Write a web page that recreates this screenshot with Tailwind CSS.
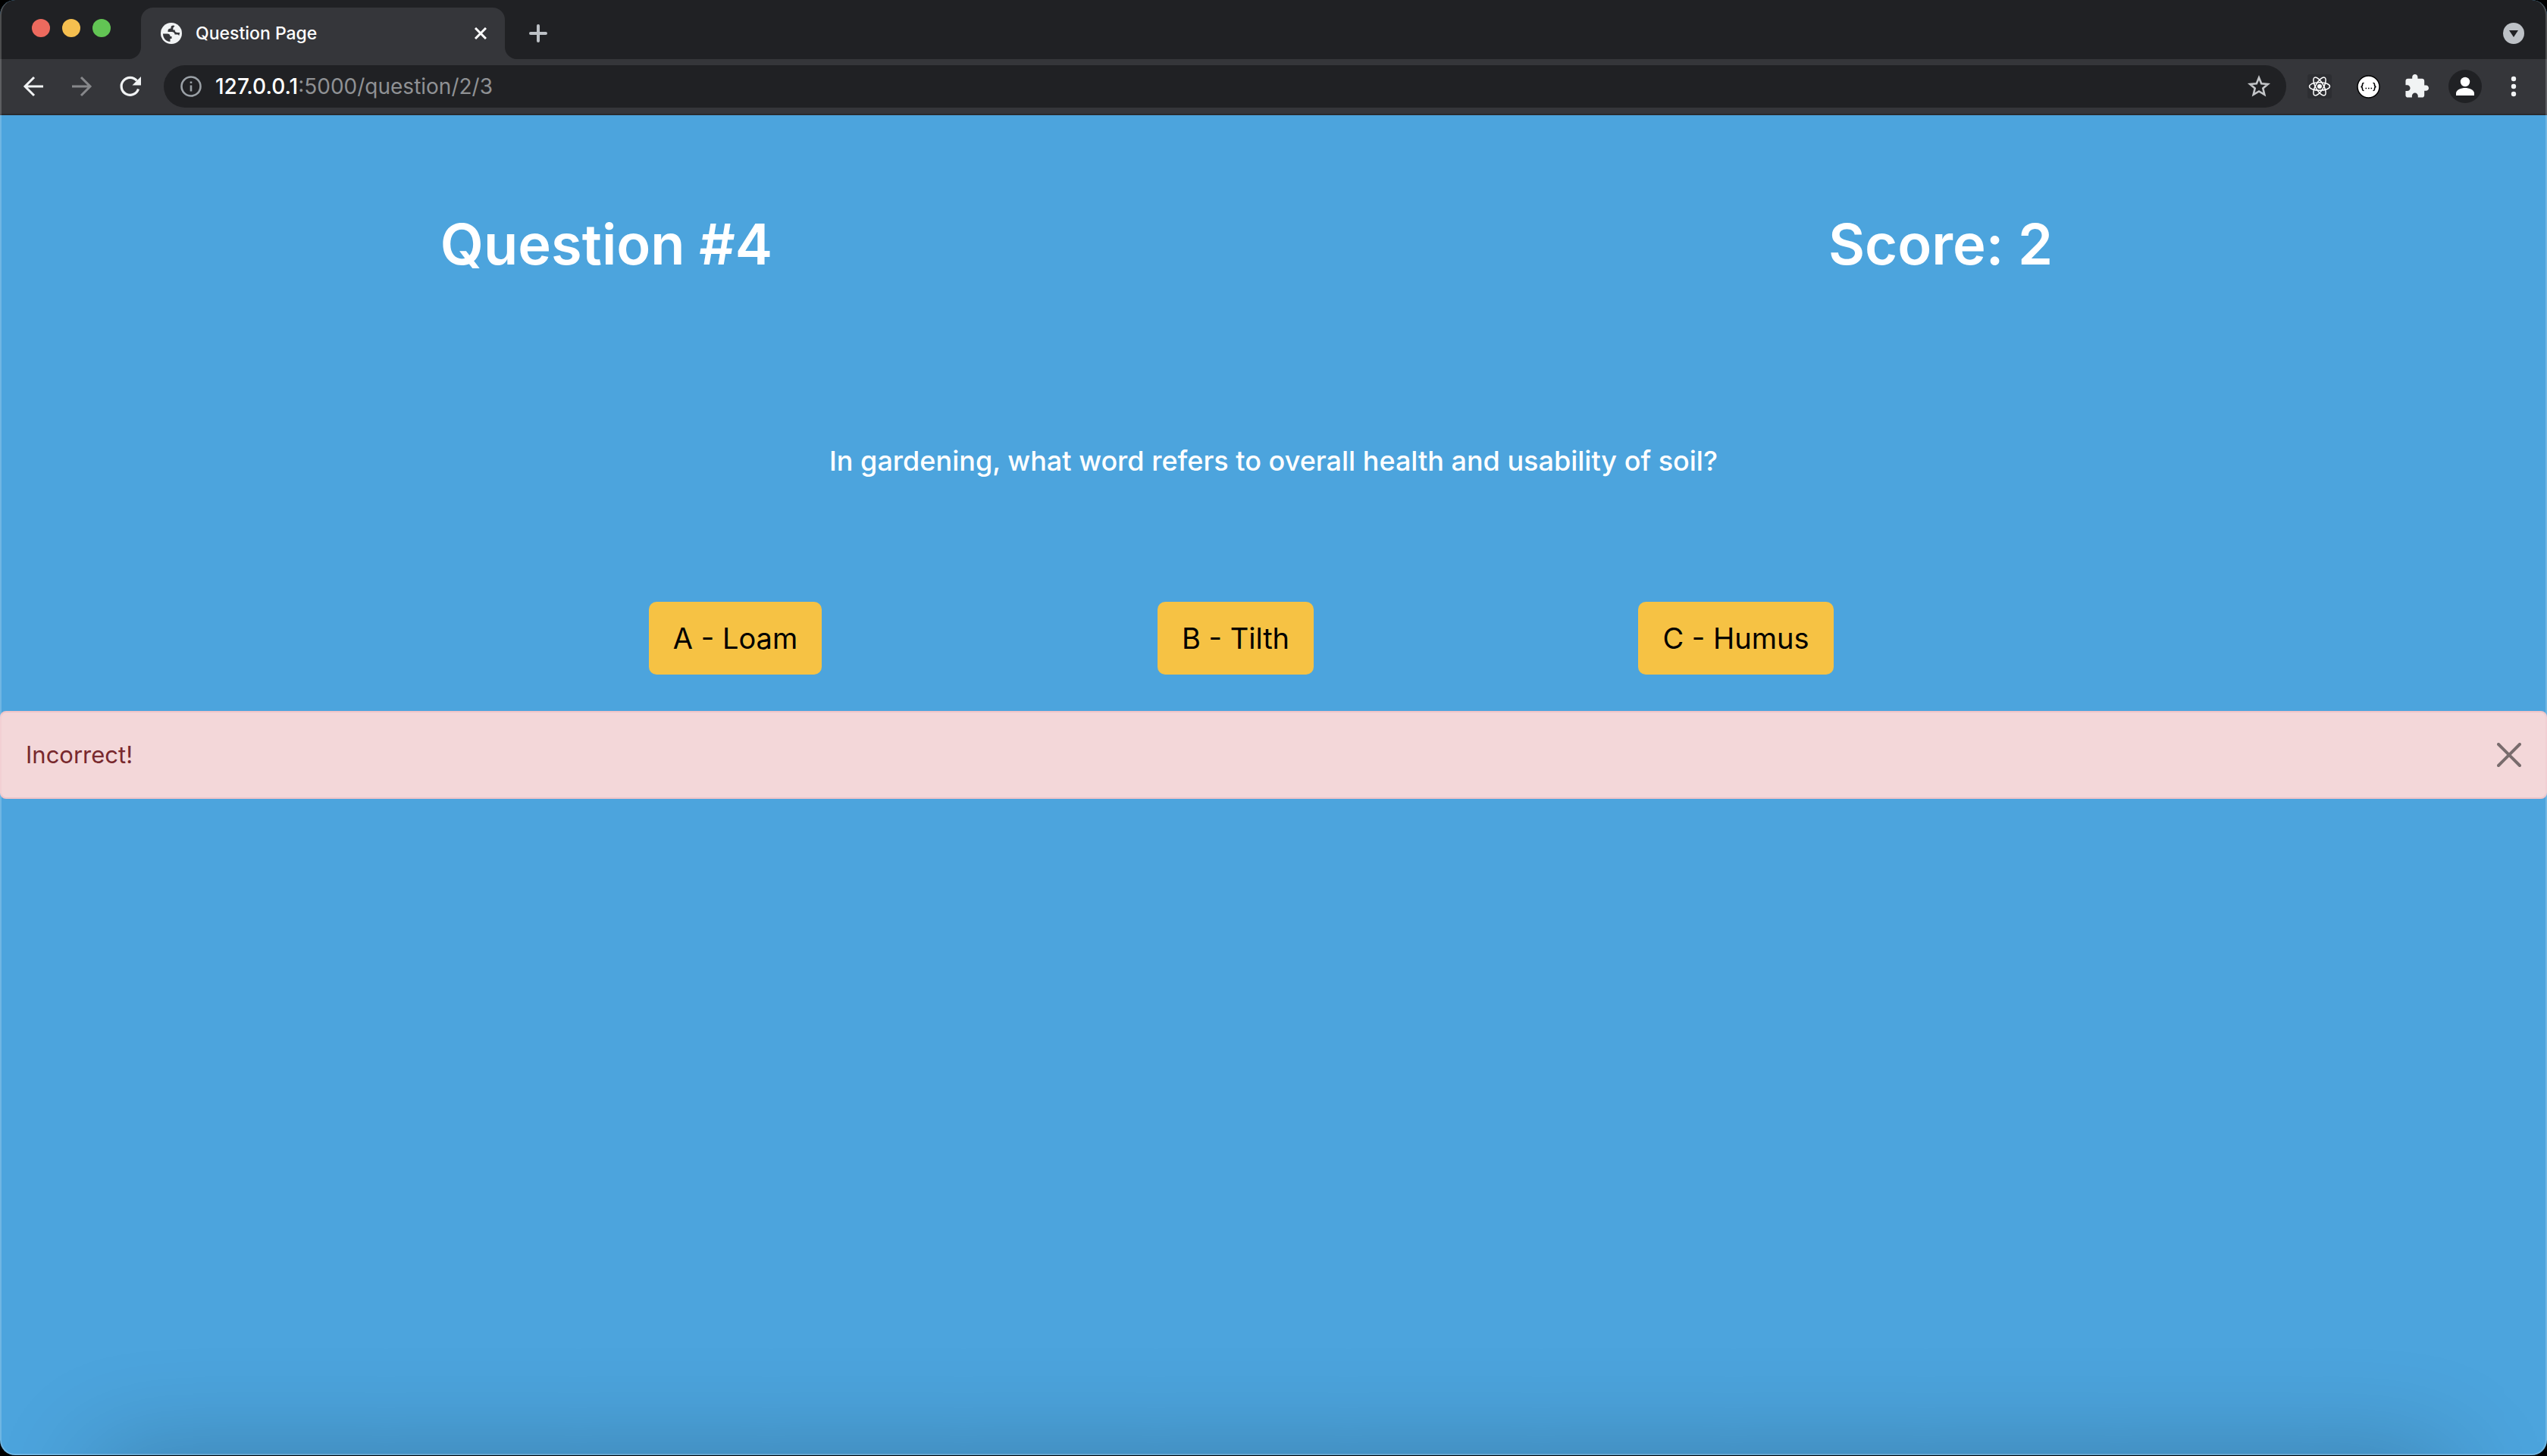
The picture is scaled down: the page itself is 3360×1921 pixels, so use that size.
<!DOCTYPE html>
<html lang="en">
<head>
<meta charset="utf-8">
<title>Question Page</title>
<script src="https://cdn.jsdelivr.net/npm/@tailwindcss/browser@4"></script>
</head>
<body class="bg-black font-['Inter',sans-serif]">
<div class="relative flex h-[calc(100vh-1px)] flex-col overflow-hidden rounded-[20px] bg-[#4ca4dd]">

  <!-- Tab strip -->
  <header class="flex h-[78px] shrink-0 items-end bg-[#202124]">
    <div class="flex h-full w-[186px] items-center gap-4 pb-1 pl-[42px]">
      <button aria-label="Close window" class="size-6 rounded-full bg-[#ed6a5e]"></button>
      <button aria-label="Minimize window" class="size-6 rounded-full bg-[#f5bf4f]"></button>
      <button aria-label="Zoom window" class="size-6 rounded-full bg-[#62c554]"></button>
    </div>
    <div class="relative flex h-[68px] w-[480px] items-center rounded-t-2xl bg-[#35363a] pr-6 pl-[26px] text-white">
      <svg class="absolute bottom-0 -left-4 size-4" viewBox="0 0 16 16" fill="#35363a"><path d="M16 0v16H0A16 16 0 0 0 16 0z"/></svg>
      <svg class="absolute -right-4 bottom-0 size-4" viewBox="0 0 16 16" fill="#35363a"><path d="M0 0v16h16A16 16 0 0 1 0 0z"/></svg>
      <svg class="size-7" viewBox="0 0 28 28"><circle cx="14" cy="14" r="14" fill="#f1f3f4"/><path d="M3 14.500h5.500c3 0 4 1.500 4 3.500h2v3h-2v4C6.500 24.500 3 20 3 14.500z" fill="#35363a"/><path d="M17 3.500c-2 0-3.500.8-3.500 2.500v1.500c-2.500 0-4 1-4 3v1.500h5c2.500 0 4 1.200 4 3.500h3c1.500 0 2.200.6 2.700 1.800l1-4.300h-3c-2 0-3.500-1-3.500-2.800V9.500H16.500c-.8-2.200.3-3.800 2-5z" fill="#35363a"/></svg>
      <span class="ml-[18px] flex-1 text-[23px] font-medium">Question Page</span>
      <button aria-label="Close tab"><svg class="size-4" viewBox="0 0 16 16" stroke="#fff" stroke-width="3"><path d="M1 1l14 14M15 1L1 15"/></svg></button>
    </div>
    <button aria-label="New tab" class="mb-[22px] ml-8"><svg class="size-6" viewBox="0 0 24 24" stroke="#bdc1c6" stroke-width="4" stroke-linecap="round"><path d="M12 2v20M2 12h20"/></svg></button>
    <button aria-label="Search tabs" class="mr-[30px] mb-5 ml-auto"><svg class="size-7" viewBox="0 0 28 28"><circle cx="14" cy="14" r="14" fill="#bdc1c6"/><path d="M8 10h12l-6 9z" fill="#202124"/></svg></button>
  </header>

  <!-- Toolbar -->
  <nav class="flex h-[74px] shrink-0 items-center border-b-2 border-[#292a2d] bg-[#35363a] pr-7 pl-7">
    <button aria-label="Back"><svg class="size-8" viewBox="0 0 32 32" fill="none" stroke="#f1f3f4" stroke-width="3"><path d="M29 16H5M17 4L5 16l12 12"/></svg></button>
    <button aria-label="Forward" class="ml-8"><svg class="size-8" viewBox="0 0 32 32" fill="none" stroke="#87888b" stroke-width="3"><path d="M3 16h24M15 4l12 12-12 12"/></svg></button>
    <button aria-label="Reload" class="ml-8"><svg class="size-8" viewBox="0 0 32 32"><path d="M26.500 19.500A11.500 11.500 0 1 1 24.500 8.500" fill="none" stroke="#f1f3f4" stroke-width="3.200"/><path d="M30 3v11.500H18.500z" fill="#f1f3f4"/></svg></button>
    <div class="ml-7 flex h-14 flex-1 items-center rounded-full bg-[#202124] pr-5 pl-[22px]">
      <svg class="size-7" viewBox="0 0 28 28" fill="none" stroke="#9aa0a6"><circle cx="14" cy="14" r="12.500" stroke-width="2.600"/><path d="M14 12.500v8M14 7.500v2.600" stroke-width="2.600"/></svg>
      <a href="#" class="ml-[18px] flex-1 text-[28px] text-[#8f9194]"><span class="font-medium text-white">127.0.0.1</span>:5000/question/2/3</a>
      <button aria-label="Bookmark this tab"><svg class="size-8" viewBox="0 0 32 32" fill="none" stroke="#c3c5c8" stroke-width="2.600"><path d="M16 4.500l3.200 7.800 8.600.7-6.500 5.500 2 8.300L16 22.400l-7.300 4.400 2-8.300L4.200 13l8.600-.7z"/></svg></button>
    </div>
    <div class="ml-7 flex items-center">
      <button aria-label="React Developer Tools" class="rounded-[3px] bg-[#2d2e32]"><svg class="size-8" viewBox="0 0 32 32" fill="none" stroke="#fff" stroke-width="1.500"><ellipse cx="16" cy="16" rx="13.500" ry="5.200"/><ellipse cx="16" cy="16" rx="13.500" ry="5.200" transform="rotate(60 16 16)"/><ellipse cx="16" cy="16" rx="13.500" ry="5.200" transform="rotate(120 16 16)"/><circle cx="16" cy="16" r="3" fill="#fff" stroke="none"/></svg></button>
      <button aria-label="JSON viewer" class="ml-8"><svg class="size-8" viewBox="0 0 32 32" fill="none" stroke="#000" stroke-width="1.600"><circle cx="16.500" cy="16.500" r="14.500" fill="#fff" stroke-width="1.500"/><path d="M10.500 11.500c-2 0-2 .6-2 2.200s-.3 2.600-2 2.800c1.700.2 2 1.200 2 2.800s0 2.200 2 2.200M22.500 11.500c2 0 2 .6 2 2.200s.3 2.600 2 2.800c-1.700.2-2 1.200-2 2.800s0 2.200-2 2.200"/><path d="M12.500 18.500h1.600M16 18.500h1.600M19.500 18.500h1.600"/></svg></button>
      <button aria-label="Extensions" class="ml-8"><svg class="size-8" viewBox="1 1 22 22" fill="#f1f3f4"><path d="M20.500 11H19V7c0-1.100-.9-2-2-2h-4V3.500C13 2.120 11.880 1 10.500 1S8 2.120 8 3.500V5H4c-1.100 0-1.990.9-1.990 2v3.800H3.500c1.490 0 2.700 1.210 2.700 2.700s-1.210 2.700-2.700 2.700H2V20c0 1.100.9 2 2 2h3.800v-1.500c0-1.490 1.210-2.700 2.700-2.700 1.490 0 2.700 1.210 2.700 2.700V22H17c1.100 0 2-.9 2-2v-4h1.500c1.380 0 2.500-1.120 2.500-2.500S21.880 11 20.500 11z"/></svg></button>
      <button aria-label="Profile" class="ml-[26px]"><svg class="size-11" viewBox="0 0 44 44" fill="#fff"><circle cx="22" cy="22" r="22" fill="#202124"/><circle cx="22" cy="16" r="6.200"/><path d="M10 34v-3c0-4.500 7-7 12-7s12 2.500 12 7v3z"/></svg></button>
      <button aria-label="Menu" class="ml-[26px]"><svg class="size-8" viewBox="0 0 32 32" fill="#f1f3f4"><circle cx="16" cy="6" r="3.200"/><circle cx="16" cy="16" r="3.200"/><circle cx="16" cy="26" r="3.200"/></svg></button>
    </div>
  </nav>

  <!-- Page -->
  <main class="flex-1">
    <div class="mx-auto flex max-w-[2240px] justify-between pt-[122px] text-center text-[74px] leading-24 font-semibold text-white">
      <h1 class="w-[480px] whitespace-nowrap">Question #4</h1>
      <p class="w-[480px] whitespace-nowrap">Score: 2</p>
    </div>
    <h2 class="mt-[214px] text-center text-[36px] leading-12 font-medium text-white">In gardening, what word refers to overall health and usability of soil?</h2>
    <div class="mx-auto mt-[162px] grid max-w-[2080px] grid-cols-3 justify-items-center pr-25 text-[38px] text-black">
      <button class="h-24 rounded-[10px] bg-[#f6c244] px-8">A - Loam</button>
      <button class="h-24 rounded-[10px] bg-[#f6c244] px-8">B - Tilth</button>
      <button class="h-24 rounded-[10px] bg-[#f6c244] px-8">C - Humus</button>
    </div>
    <div role="alert" class="mt-12 flex h-[116px] items-center justify-between rounded-lg border-2 border-[#efc4c8] bg-[#f3d7d9] px-8 text-[31px] text-[#78292e]">
      <span>Incorrect!</span>
      <button aria-label="Close"><svg class="size-8" viewBox="0 0 32 32" stroke="#796c6d" stroke-width="4" stroke-linecap="round"><path d="M2 2l28 28M30 2L2 30"/></svg></button>
    </div>
  </main>

  <!-- Shade along the bottom edge, and the window outline -->
  <div class="pointer-events-none absolute inset-x-[130px] top-full h-40 shadow-[0_0_140px_rgba(0,0,0,0.24)]"></div>
  <div class="pointer-events-none absolute inset-0 rounded-[20px] border-2 border-t-0 border-white/20"></div>
</div>
</body>
</html>
